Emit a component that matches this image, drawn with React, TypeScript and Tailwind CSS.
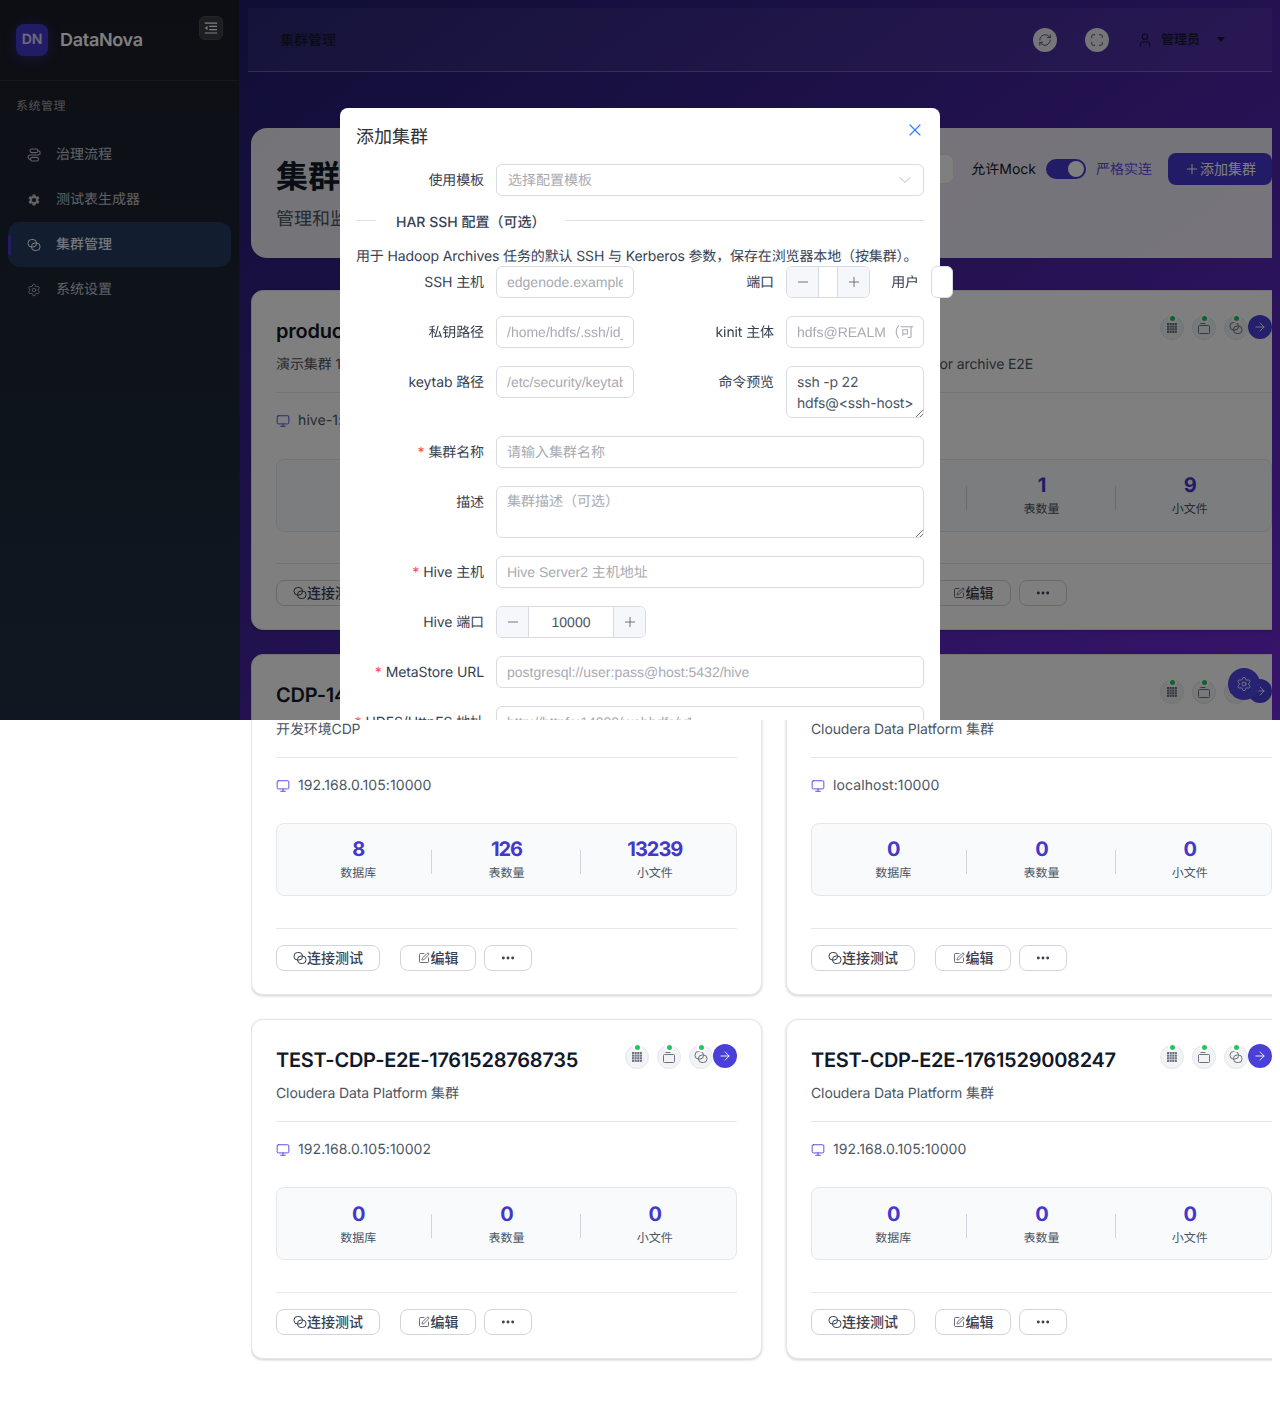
import React from 'react';
import { ArrowRight, ChevronDown, Ellipsis, Maximize, Minus, Monitor, Plus, RefreshCw, Settings, SquarePen, User, X } from 'lucide-react';
import { AiOutlineMenuFold } from 'react-icons/ai';
import { MdSettings } from 'react-icons/md';

const FONT = "font-['Inter','Noto_Sans_CJK_SC',sans-serif]";
const INPUT_FONT = "font-['Liberation_Sans','Noto_Sans_CJK_SC',sans-serif]";

// two interlocked rounded rings, used for connection test / cluster
function LinkRings({ className = 'w-3.5 h-3.5' }: { className?: string }) {
  return (
    <svg viewBox="0 0 14 14" fill="none" stroke="currentColor" strokeWidth="1" className={className}>
      <rect x="1" y="1.5" width="8.5" height="7.5" rx="3.5" />
      <rect x="4.5" y="5" width="8.5" height="7.5" rx="3.5" />
    </svg>
  );
}

function FlowIcon() {
  return (
    <svg viewBox="0 0 14 14" fill="none" stroke="currentColor" strokeWidth="1.1" className="w-3.5 h-3.5">
      <rect x="3" y="1" width="8" height="3.6" rx="1.8" />
      <rect x="3.5" y="9.4" width="8" height="3.6" rx="1.8" />
      <path d="M11 2.8h.6a2.2 2.2 0 0 1 0 4.2H2.6a2.2 2.2 0 0 0 0 4.2h.9" />
    </svg>
  );
}

function GridIcon() {
  const cells = [0, 1, 2, 3];
  return (
    <svg viewBox="0 0 12 12" fill="currentColor" className="w-3 h-3">
      {cells.map(r => cells.map(c => <rect key={`${r}-${c}`} x={1 + c * 2.6} y={1 + r * 2.6} width="2.1" height="2.1" />))}
    </svg>
  );
}

function BoxIcon() {
  return (
    <svg viewBox="0 0 14 14" fill="none" stroke="currentColor" strokeWidth="1" className="w-3.5 h-3.5">
      <rect x="1.5" y="4.5" width="11" height="8" rx="1" />
      <path d="M3.5 2.5h5" />
    </svg>
  );
}

function ResizeGrip() {
  return (
    <svg viewBox="0 0 8 8" fill="none" stroke="#555" strokeWidth="0.8" className="absolute right-0 bottom-0 w-2 h-2">
      <path d="M1 8 8 1M5 8l3-3" />
    </svg>
  );
}

type NavItem = { label: string; icon: React.ReactNode; active?: boolean };

const navItems: NavItem[] = [
  { label: '治理流程', icon: <FlowIcon /> },
  { label: '测试表生成器', icon: <MdSettings className="w-4 h-4" /> },
  { label: '集群管理', icon: <LinkRings />, active: true },
  { label: '系统设置', icon: <Settings className="w-3.5 h-3.5" strokeWidth={1.4} /> },
];

function Sidebar() {
  return (
    <aside className="w-[240px] h-[720px] shrink-0 bg-gradient-to-b from-[#1a1d27] to-[#1e3044] border-r border-[#262b38]">
      <div className="h-[81px] border-b border-[#2b303c] pl-4 pr-4 pt-6 flex relative">
        <div className="w-8 h-8 rounded-lg bg-[#4338ca] text-white/80 text-sm font-semibold flex items-center justify-center shadow-[0_2px_12px_rgba(67,56,202,0.5)]">DN</div>
        <span className="ml-3 mt-[1px] text-lg font-semibold tracking-[-0.3px] text-white leading-8">DataNova</span>
        <div className="absolute left-[199px] top-4 w-6 h-6 rounded-md bg-[#3a3d45] border border-[#484b53] text-white flex items-center justify-center">
          <AiOutlineMenuFold className="w-4 h-4" />
        </div>
      </div>
      <div className="pt-[17px] pl-4 text-xs text-[#a0a0a8] leading-[16px] tracking-[0.5px]">系统管理</div>
      <nav className="mt-[18px] px-2 flex flex-col">
        {navItems.map(item => (
          <div
            key={item.label}
            className={`relative h-[45px] rounded-xl flex items-center pl-[19px] text-sm ${item.active ? 'bg-[#243c60] text-white' : 'text-[#c0c2c8]'}`}
          >
            {item.active && <span className="absolute left-0 top-[13px] w-[3px] h-5 rounded-sm bg-[#4338ca]" />}
            <span className="w-3.5 mr-[15px] flex justify-center">{item.icon}</span>
            {item.label}
          </div>
        ))}
      </nav>
    </aside>
  );
}

function Header() {
  return (
    <header className="h-[64px] ml-2 mt-2 flex items-center pl-8 border-b border-white/25 bg-white/5 text-[#111827]">
      <span className="text-sm font-medium pt-[2px]">集群管理</span>
      <div className="ml-auto flex items-center pr-[47px]">
        <span className="w-6 h-6 rounded-full bg-white/90 text-[#374151] flex items-center justify-center mr-[28px]"><RefreshCw className="w-3.5 h-3.5" strokeWidth={1.4} /></span>
        <span className="w-6 h-6 rounded-full bg-white/90 text-[#374151] flex items-center justify-center mr-[28px]"><Maximize className="w-3.5 h-3.5" strokeWidth={1.4} /></span>
        <User className="w-4 h-4 mr-[8px]" strokeWidth={1.6} />
        <span className="text-[13px] font-medium pt-[3px]">管理员</span>
        <span className="ml-[17px] w-0 h-0 border-x-[4px] border-x-transparent border-t-[5px] border-t-[#111827]" />
      </div>
    </header>
  );
}

function StatusDot({ children }: { children: React.ReactNode }) {
  return (
    <div className="relative w-6 h-6 rounded-full bg-[#f1f3f5] border border-[#e5e7eb] text-[#6b7280] flex items-center justify-center">
      <span className="absolute -top-[3px] left-[7px] w-[9px] h-[9px] rounded-full bg-[#22c55e] border-[2px] border-white" />
      {children}
    </div>
  );
}

type Cluster = { name: string; desc: string; host: string; db: number; tables: number; files: number };

const clusters: Cluster[] = [
  { name: 'production-cluster', desc: '演示集群 1', host: 'hive-1:10000', db: 1, tables: 1, files: 0 },
  { name: 'HAR-TEST', desc: 'Sample HA cluster for archive E2E', host: 'localhost:10000', db: 1, tables: 1, files: 9 },
  { name: 'CDP-14', desc: '开发环境CDP', host: '192.168.0.105:10000', db: 8, tables: 126, files: 13239 },
  { name: 'CDP-E2E', desc: 'Cloudera Data Platform 集群', host: 'localhost:10000', db: 0, tables: 0, files: 0 },
  { name: 'TEST-CDP-E2E-1761528768735', desc: 'Cloudera Data Platform 集群', host: '192.168.0.105:10002', db: 0, tables: 0, files: 0 },
  { name: 'TEST-CDP-E2E-1761529008247', desc: 'Cloudera Data Platform 集群', host: '192.168.0.105:10000', db: 0, tables: 0, files: 0 },
];

function Stat({ value, label, divider }: { value: number; label: string; divider?: boolean }) {
  return (
    <div className="relative flex flex-col items-center pt-[2px]">
      <span className="text-xl font-bold tracking-[-1px] leading-[24px] text-[#4338ca]">{value}</span>
      <span className="mt-[2px] text-xs leading-[20px] text-[#4b5563]">{label}</span>
      {divider && <span className="absolute right-0 top-[14.5px] w-px h-6 bg-[#d1d5db]" />}
    </div>
  );
}

function ClusterCard({ cluster }: { cluster: Cluster }) {
  return (
    <div className="w-[511px] h-[340.4px] shrink-0 rounded-xl bg-white border border-[#e5e7eb] shadow-[0_1px_3px_rgba(0,0,0,0.2)] px-6 pt-6 flex flex-col">
      <div className="flex justify-between h-[28px]">
        <h3 className="text-xl leading-[28px] font-semibold tracking-[-0.25px] text-[#111827] mt-[2px] whitespace-nowrap">{cluster.name}</h3>
        <div className="flex gap-2 relative pt-[1px] pr-[24px]">
          <StatusDot><GridIcon /></StatusDot>
          <StatusDot><BoxIcon /></StatusDot>
          <StatusDot><LinkRings className="w-3.5 h-3.5" /></StatusDot>
          <span className="absolute right-0 top-0 w-6 h-6 rounded-full bg-[#4a40d8] text-white flex items-center justify-center">
            <ArrowRight className="w-3.5 h-3.5" strokeWidth={1.5} />
          </span>
        </div>
      </div>
      <p className="mt-[11.4px] text-sm leading-[22px] tracking-[-0.12px] text-[#4b5563] whitespace-nowrap">{cluster.desc}</p>
      <div className="mt-[15.9px] border-t border-[#e5e7eb]" />
      <div className="mt-[17px] h-[22px] flex items-center text-sm tracking-[0.1px] text-[#4b5563]">
        <Monitor className="w-3.5 h-3.5 text-[#4f46e5] mr-2" strokeWidth={1.6} />
        {cluster.host}
      </div>
      <div className="mt-[26.3px] h-[73px] rounded-lg bg-[#f8fafc] border border-[#e5e7eb] px-[7px] grid grid-cols-3 items-center">
        <Stat value={cluster.db} label="数据库" divider />
        <Stat value={cluster.tables} label="表数量" divider />
        <Stat value={cluster.files} label="小文件" />
      </div>
      <div className="mt-[31.8px] border-t border-[#e5e7eb]" />
      <div className="mt-[16px] flex text-sm text-[#374151] font-medium">
        <button className="w-[104px] h-[26px] rounded-lg border border-[#d1d5db] flex items-center justify-center">
          <LinkRings className="w-3.5 h-3.5" />连接测试
        </button>
        <button className="ml-5 w-[76px] h-[26px] rounded-lg border border-[#d1d5db] flex items-center justify-center">
          <SquarePen className="w-3 h-3 mr-[1px]" strokeWidth={1.5} />编辑
        </button>
        <button className="ml-2 w-[48px] h-[26px] rounded-lg border border-[#d1d5db] flex items-center justify-center">
          <Ellipsis className="w-4 h-4" strokeWidth={2.4} />
        </button>
      </div>
    </div>
  );
}

function PageHead() {
  return (
    <div className="h-[130px] rounded-l-2xl bg-white/90 pl-[25px] pt-[29px] flex">
      <div>
        <h1 className="text-[32px] leading-[40px] font-bold text-[#111827]">集群管理</h1>
        <p className="mt-[9px] text-lg leading-[28px] text-[#4b5563]">管理和监控集群</p>
      </div>
      <div className="ml-auto flex items-start text-sm -mt-[3px]">
        <span className="w-[60px] h-[30px] bg-white border border-[#e5e7eb] rounded-lg mr-[17px]" />
        <span className="leading-[32px] text-[#111827]">允许Mock</span>
        <span className="ml-[10px] mt-[5px] w-10 h-5 rounded-full bg-[#4338ca] relative">
          <span className="absolute right-[2px] top-[2px] w-4 h-4 rounded-full bg-white" />
        </span>
        <span className="ml-[10px] leading-[32px] text-[#5b50f0]">严格实连</span>
        <button className="ml-4 w-[104px] h-8 rounded-lg bg-[#4338ca] text-white flex items-center justify-center -mt-[1px]">
          <Plus className="w-4 h-4" strokeWidth={1.5} />添加集群
        </button>
      </div>
    </div>
  );
}

const fieldBase = `h-8 rounded-md border border-[#d9dbe4] bg-white text-sm flex items-center px-[10px] whitespace-nowrap ${INPUT_FONT}`;

function Label({ text, required, width = 'w-[128px]' }: { text: string; required?: boolean; width?: string }) {
  return (
    <label className={`${width} shrink-0 h-8 pt-[2px] flex items-center justify-end text-sm tracking-[-0.1px] text-[#374151] whitespace-nowrap`}>
      {required && <span className="text-[#ff4d4f] mr-1">*</span>}
      {text}
    </label>
  );
}

function Field({ text, className = 'flex-1' }: { text: string; className?: string }) {
  return (
    <div className={`${fieldBase} ${className} shrink-0 text-[#a8abb2]`}>
      <span className="block w-full overflow-hidden">{text}</span>
    </div>
  );
}

function NumberField({ value, width }: { value?: string; width: string }) {
  return (
    <div className={`${width} h-8 shrink-0 rounded-md border border-[#d9dbe4] bg-white flex text-sm text-[#4b5563] overflow-hidden ${INPUT_FONT}`}>
      <span className="w-[32px] bg-[#f5f7fa] border-r border-[#d9dbe4] flex items-center justify-center"><Minus className="w-4 h-4" strokeWidth={1.2} /></span>
      <span className="flex-1 flex items-center justify-center">{value}</span>
      <span className="w-[32px] bg-[#f5f7fa] border-l border-[#d9dbe4] flex items-center justify-center"><Plus className="w-4 h-4" strokeWidth={1.2} /></span>
    </div>
  );
}

function Modal() {
  return (
    <div className="absolute left-[340px] top-[108px] w-[600px] h-[800px] rounded-lg bg-white px-4 pt-[14px] text-[#374151]">
      <div className="flex justify-between">
        <h2 className="text-lg pt-[2px] leading-[28px] text-[#303133]">添加集群</h2>
        <X className="w-5 h-5 text-[#2f7fff] -mt-[2px] -mr-[1px]" strokeWidth={1.4} />
      </div>
      <div className="mt-[12px] flex gap-3">
        <Label text="使用模板" />
        <div className={`${fieldBase} flex-1 justify-between pl-[11px] text-[#a8abb2]`}>
          选择配置模板
          <ChevronDown className="w-5 h-5 -mr-[2px] text-[#a8abb2]" strokeWidth={1} />
        </div>
      </div>
      <div className="mt-[14px] h-[24px] relative flex items-center text-sm font-medium text-[#374151]">
        <span className="w-5 -mt-[4px] border-t border-[#dcdfe6]" />
        <span className="mx-5 pt-[2px] whitespace-nowrap">HAR SSH 配置（可选）</span>
        <span className="flex-1 -mt-[4px] border-t border-[#dcdfe6]" />
      </div>
      <p className="mt-[12px] h-[22px] text-sm leading-[22px] tracking-[-0.13px] whitespace-nowrap">用于 Hadoop Archives 任务的默认 SSH 与 Kerberos 参数，保存在浏览器本地（按集群）。</p>
      <div className="-mt-[2px] flex flex-col gap-[18px]">
        <div className="flex">
          <Label text="SSH 主机" />
          <Field text="edgenode.example.com" className="ml-3 w-[138px]" />
          <Label text="端口" width="w-[140px]" />
          <div className="ml-3"><NumberField width="w-[84px]" /></div>
          <Label text="用户" width="w-[49px]" />
          <div className="ml-3 w-[22px] shrink-0 h-8 rounded-md border border-[#d9dbe4] bg-white" />
        </div>
        <div className="flex">
          <Label text="私钥路径" />
          <Field text="/home/hdfs/.ssh/id_rsa" className="ml-3 w-[138px]" />
          <Label text="kinit 主体" width="w-[140px]" />
          <Field text="hdfs@REALM（可选）" className="ml-3 w-[138px]" />
        </div>
        <div className="flex h-[52px]">
          <Label text="keytab 路径" />
          <Field text="/etc/security/keytabs/hdfs" className="ml-3 w-[138px]" />
          <Label text="命令预览" width="w-[140px]" />
          <div className="relative ml-3 w-[138px] h-[52px] rounded-md border border-[#d9dbe4] px-[10px] pt-[5px] text-sm leading-[21px] tracking-[-0.2px] text-[#4b5563] whitespace-nowrap">
            ssh -p 22<br />hdfs@&lt;ssh-host&gt;
            <ResizeGrip />
          </div>
        </div>
        <div className="flex gap-3">
          <Label text="集群名称" required />
          <Field text="请输入集群名称" />
        </div>
        <div className="flex gap-3">
          <Label text="描述" />
          <div className={`relative flex-1 h-[52px] rounded-md border border-[#d9dbe4] px-[10px] py-[4px] text-sm leading-[21px] text-[#a8abb2] ${INPUT_FONT}`}>
            集群描述（可选）
            <ResizeGrip />
          </div>
        </div>
        <div className="flex gap-3">
          <Label text="Hive 主机" required />
          <Field text="Hive Server2 主机地址" />
        </div>
        <div className="flex gap-3">
          <Label text="Hive 端口" />
          <NumberField value="10000" width="w-[150px]" />
        </div>
        <div className="flex gap-3">
          <Label text="MetaStore URL" required />
          <Field text="postgresql://user:pass@host:5432/hive" />
        </div>
        <div className="flex gap-3">
          <Label text="HDFS/HttpFS 地址" required />
          <Field text="http://httpfs:14000/webhdfs/v1" />
        </div>
      </div>
    </div>
  );
}

export default function App() {
  return (
    <div className={`${FONT} [text-rendering:geometricPrecision] relative w-[1280px] h-[1424px] overflow-hidden bg-white`}>
      <div className="flex">
        <Sidebar />
        <main className="w-[1040px] h-[720px] bg-gradient-to-br from-[#1e1c6c] to-[#7028d8]">
          <div className="w-[1032px]">
            <Header />
            <div className="ml-[11px] mt-[56px] overflow-hidden flex flex-col gap-[32px] h-[1300px]">
              <PageHead />
              <div className="grid grid-cols-[511px_511px] gap-x-[24px] gap-y-[24px]">
                {clusters.map(c => <ClusterCard key={c.desc + c.name} cluster={c} />)}
              </div>
            </div>
          </div>
        </main>
      </div>
      <span className="absolute left-[1228px] top-[668px] w-8 h-8 rounded-full bg-[#4f46e5] text-white flex items-center justify-center">
        <Settings className="w-4 h-4" strokeWidth={1.3} />
      </span>
      <div className="absolute inset-x-0 top-0 h-[720px] bg-black/50 backdrop-blur-[0.5px] overflow-hidden">
        <Modal />
      </div>
    </div>
  );
}
